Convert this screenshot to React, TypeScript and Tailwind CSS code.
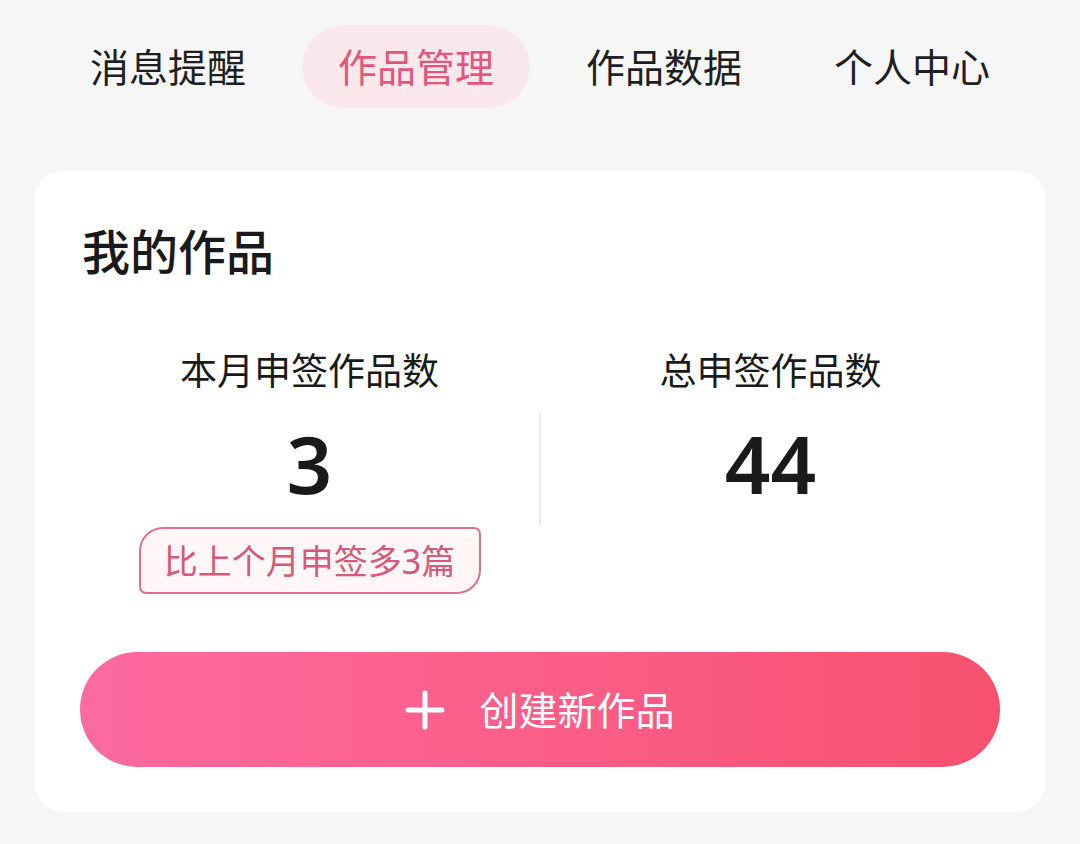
const tabs = ['消息提醒', '作品管理', '作品数据', '个人中心']

function PlusIcon() {
  return (
    <svg width="40" height="40" viewBox="0 0 40 40" fill="none" stroke="currentColor" strokeWidth="5" strokeLinecap="round">
      <path d="M20 3v34M3 20h34" />
    </svg>
  )
}

export default function App() {
  return (
    <div
      className="min-h-[844px] w-[1080px] bg-[#f6f6f6] text-[#1a1a1a]"
      style={{ fontFamily: '"Noto Sans", "Noto Sans CJK SC", sans-serif' }}
    >
      <nav className="grid grid-cols-4 px-[44px] pt-[25px]">
        {tabs.map((t, i) => (
          <div key={t} className="flex justify-center">
            <div
              className={
                i === 1
                  ? 'flex h-[83px] w-[228px] items-center justify-center rounded-full bg-[#fbe8ec] text-[39px] leading-none text-[#e0577b]'
                  : 'flex h-[83px] items-center justify-center text-[39px] leading-none text-[#1f1f1f]'
              }
            >
              {t}
            </div>
          </div>
        ))}
      </nav>

      <section className="mx-[35px] mt-[63px] rounded-[28px] bg-white px-[45px] pb-[45px] pt-[57px]">
        <h2 className="px-[2px] text-[48px] font-medium leading-[47px]">我的作品</h2>

        <div className="mt-[77px] grid grid-cols-[1fr_2px_1fr]">
          <div className="flex flex-col items-center">
            <div className="text-[37px] leading-[37px]">本月申签作品数</div>
            <div className="mt-[34px] flex h-[80px] items-center text-[80px] font-semibold leading-none">3</div>
            <div className="mt-[24px] flex h-[67px] w-[342px] items-center justify-center rounded-tl-[24px] rounded-tr-[7px] rounded-bl-[7px] rounded-br-[24px] border-2 border-[#e0718a] bg-[#fff6f8] text-[34px] leading-none text-[#d6587a]">
              比上个月申签多3篇
            </div>
          </div>
          <div className="mt-[60px] h-[113px] bg-[#ececec]" />
          <div className="flex flex-col items-center">
            <div className="text-[37px] leading-[37px]">总申签作品数</div>
            <div className="mt-[34px] flex h-[80px] items-center text-[80px] font-semibold leading-none">44</div>
          </div>
        </div>

        <button className="mt-[58px] flex h-[115px] w-full items-center justify-center gap-[34px] rounded-full bg-linear-to-r from-[#fd6aa0] to-[#f7516f] text-white">
          <PlusIcon />
          <span className="text-[39px] leading-none">创建新作品</span>
        </button>
      </section>
    </div>
  )
}
